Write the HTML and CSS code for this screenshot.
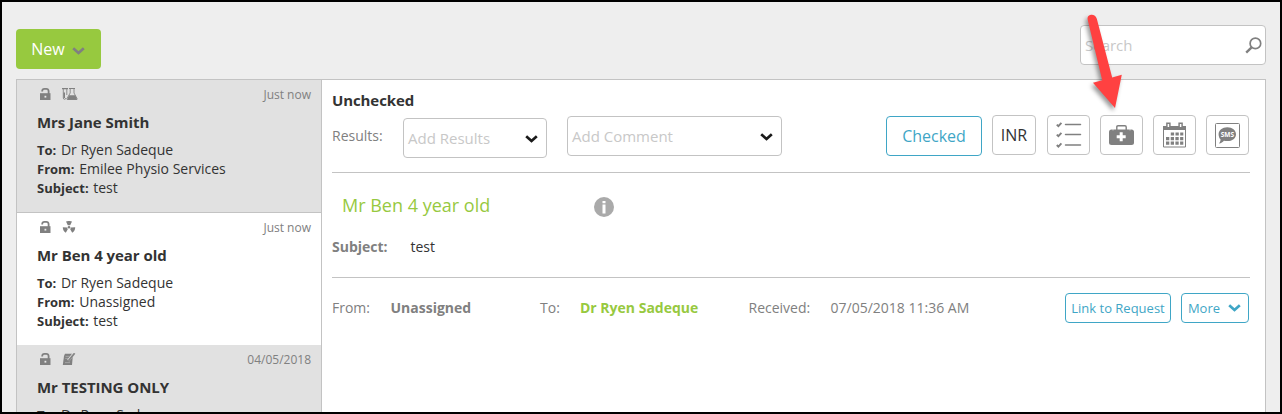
FILE: index.html
```html
<!DOCTYPE html>
<html lang="en">
<head>
  <meta charset="UTF-8">
  <meta name="viewport" content="width=device-width, initial-scale=1">
  <title>Inbox</title>
  <link rel="stylesheet" href="styles.css">
</head>
<body>

  <!-- shared icons -->
  <svg class="sprite" width="0" height="0">
    <symbol id="lock" viewBox="0 0 11 12">
      <path d="M0 5.2h10.500V12H0z"/>
      <path d="M2.200 3.600V3a2.200 2.200 0 0 1 2.200-2.100h1.900A2.300 2.300 0 0 1 8.600 3v3" fill="none" stroke="#808080" stroke-width="1.800"/>
      <path d="M4.500 7.800h1.800v1.800H4.500z" fill="#e8e8e8"/>
    </symbol>
    <symbol id="chevron" viewBox="0 0 13 8">
      <path d="M1.2 1.2l5.3 4.8 5.3-4.8" fill="none" stroke="currentColor" stroke-width="2.7"/>
    </symbol>
  </svg>

  <div class="app">
    <header class="toolbar">
      <button class="btn-new">New <svg class="chev" width="13" height="8"><use href="#chevron"/></svg></button>
      <div class="search">
        <span>Search</span>
        <svg width="17" height="17" viewBox="0 0 17 17" fill="none" stroke="#808080">
          <circle cx="10.4" cy="6.4" r="5.3" stroke-width="1.7"/>
          <path d="M6.6 10.4L1.2 15.6" stroke-width="2.4"/>
        </svg>
      </div>
    </header>

    <main class="panel">
      <aside class="list">
        <article class="item">
          <div class="item-top">
            <svg class="icon lock" width="11" height="12"><use href="#lock"/></svg>
            <svg class="icon" width="16" height="12" viewBox="0 0 16 12">
              <path d="M0 0h6v1.2H0zM7 0h6v1H7z"/>
              <path d="M1.3 1v9a1.2 1.2 0 0 0 2.600 0M4.800 1v6M8.200 1v4L5 10.500q-.4 1 .6 1h8.800q1 0 .6-1L12 5V1" fill="none" stroke="#858585" stroke-width="0.9"/>
              <path d="M1.400 4.500h1.600V10H1.600zM7 7.200h6.300l2 4.500H5z"/>
            </svg>
            <span class="when">Just now</span>
          </div>
          <h3>Mrs Jane Smith</h3>
          <p><b>To:</b> Dr Ryen Sadeque</p>
          <p><b>From:</b> Emilee Physio Services</p>
          <p><b>Subject:</b> test</p>
        </article>

        <article class="item active">
          <div class="item-top">
            <svg class="icon lock" width="11" height="12"><use href="#lock"/></svg>
            <svg class="icon" width="14" height="12" viewBox="0 0 14 12">
              <path d="M4 0.500Q7-0.600 10 0.500L8.200 4.200H5.800zM0.800 6.200L5 6.500 5.800 8.200 3.800 11.800Q0.800 10 0.800 6.200zM13.200 6.200L9 6.500 8.200 8.200l2 3.600Q13.200 10 13.200 6.200z"/>
              <circle cx="7" cy="6.300" r="1.300"/>
            </svg>
            <span class="when">Just now</span>
          </div>
          <h3>Mr Ben 4 year old</h3>
          <p><b>To:</b> Dr Ryen Sadeque</p>
          <p><b>From:</b> Unassigned</p>
          <p><b>Subject:</b> test</p>
        </article>

        <article class="item">
          <div class="item-top">
            <svg class="icon lock" width="11" height="12"><use href="#lock"/></svg>
            <svg class="icon" width="14" height="12" viewBox="0 0 14 12">
              <path d="M3 0.800h8L10 12H0.800L2 3z"/>
              <path d="M3.500 3.400h4M3.200 5.400h3M3 9.600h5" stroke="#bbb" stroke-width="0.6"/>
              <path d="M12 0.3L6.2 7.6" stroke="#e1e1e1" stroke-width="2.600"/>
              <path d="M12.6 0.3L6.400 7.900" stroke="#858585" stroke-width="1.800"/>
            </svg>
            <span class="when">04/05/2018</span>
          </div>
          <h3>Mr TESTING ONLY</h3>
          <p><b>To:</b> Dr Ryen Sadeque</p>
        </article>
      </aside>

      <section class="detail">
        <div class="actions">
          <div class="filters">
            <h2>Unchecked</h2>
            <div class="filter-row">
              <span class="label">Results:</span>
              <div class="select results">Add Results <svg width="13" height="8"><use href="#chevron"/></svg></div>
              <div class="select comment">Add Comment <svg width="13" height="8"><use href="#chevron"/></svg></div>
            </div>
          </div>
          <div class="buttons">
            <button class="btn-checked">Checked</button>
            <button class="tool inr">INR</button>
            <button class="tool">
              <svg width="26" height="26" viewBox="0 0 26 26" fill="none" stroke="#808080">
                <path d="M9.500 2.500h15M9.500 12.500h15M9.500 23h15" stroke-width="1.500" stroke-linecap="round"/>
                <path d="M0.800 2.600l1.600 1.600L5.400 0.900M0.800 12.600l1.600 1.600 3-3.300M0.800 23l1.600 1.600 3-3.300" stroke-width="1.900"/>
              </svg>
            </button>
            <button class="tool">
              <svg width="25" height="20" viewBox="0 0 25 20">
                <rect x="0" y="4.5" width="25" height="15.5" rx="2.5" fill="#808080"/>
                <path d="M7.8 5V2q0-1.2 1.2-1.2h7q1.2 0 1.2 1.2v3" fill="none" stroke="#808080" stroke-width="1.4"/>
                <path d="M4 4.5v0.8M21 4.5v0.8" stroke="#fff"/>
                <path d="M12.200 7.300v9M7.700 11.800h9" stroke="#fff" stroke-width="3"/>
              </svg>
            </button>
            <button class="tool">
              <svg width="23" height="26" viewBox="0 0 23 26">
                <path d="M0 4h23v4H0z" fill="#808080"/>
                <path d="M0.5 8v17h22V8" fill="none" stroke="#808080"/>
                <path d="M3.9 1.2h3v4.500h-3zM16.1 1.2h3v4.500h-3z" fill="#fff" stroke="#808080" stroke-width="1.5"/>
                <path d="M7.800 12h12.500M3 16.600h17.300M3 21.200h17.300" stroke="#808080" stroke-width="3.200" stroke-dasharray="3.300 1.400"/>
              </svg>
            </button>
            <button class="tool">
              <svg width="25" height="25" viewBox="0 0 25 25">
                <rect x="0.5" y="0.5" width="24" height="24" rx="1" fill="none" stroke="#808080"/>
                <path d="M12.300 4.300c5 0 8.700 2.900 8.700 6.900s-3.700 6.900-8.700 6.900c-1.300 0-2.400-.1-3.400-.4-1.200 1.500-2.600 2.500-4.900 2.900 1-1.200 1.600-2.600 1.500-4.300-1.200-1.100-1.900-2.900-1.900-5.100 0-4 3.700-6.900 8.700-6.900z" fill="#808080"/>
                <text x="12.400" y="14" text-anchor="middle" class="sms">SMS</text>
              </svg>
            </button>
          </div>
        </div>

        <div class="summary">
          <div class="patient">
            <span class="name">Mr Ben 4 year old</span>
            <svg width="20" height="20" viewBox="0 0 20 20">
              <circle cx="10" cy="10" r="10" fill="#aaa"/>
              <path d="M8.5 4h3v2.2h-3zM8.5 7.4h3v9h-3z" fill="#fff"/>
            </svg>
          </div>
          <div class="subject"><b>Subject:</b><span>test</span></div>
        </div>

        <div class="meta">
          <span class="meta-from">From:</span>
          <b class="meta-sender">Unassigned</b>
          <span class="meta-to">To:</span>
          <b class="meta-doctor">Dr Ryen Sadeque</b>
          <span class="meta-received">Received:</span>
          <span>07/05/2018 11:36 AM</span>
          <div class="meta-buttons">
            <button class="btn-small link">Link to Request</button>
            <button class="btn-small more">More <svg width="13" height="8"><use href="#chevron"/></svg></button>
          </div>
        </div>
      </section>
    </main>
  </div>

  <!-- pointer over the medical case button -->
  <svg class="arrow" width="50" height="110" viewBox="0 0 50 110">
    <path d="M9.700 10.800Q8.800 6.400 13 5.700Q17.300 5.300 18.800 9.700L34.200 68.500L43.800 65.700L37 99L15 73.800L24.200 71.300z" fill="#ff4141"/>
  </svg>

</body>
</html>
```
FILE: styles.css
```css
* {
  box-sizing: border-box;
}
body {
  margin: 0;
  font-family: "Open Sans", sans-serif;
  font-size: 14px;
  color: #333;
}
h2, h3, p {
  margin: 0;
}
svg {
  display: block;
  flex-shrink: 0;
}
button {
  font-family: inherit;
  background: #fff;
  border-radius: 4px;
  padding: 0;
  display: flex;
  align-items: center;
  justify-content: center;
}
.sprite {
  position: absolute;
}
.app {
  height: 414px;
  border: 2px solid #000;
  background: #eee;
  overflow: hidden;
  display: flex;
  flex-direction: column;
}
/* toolbar */
.toolbar {
  height: 77px;
  flex-shrink: 0;
  padding: 23px 14px 0;
  display: flex;
  justify-content: space-between;
  align-items: flex-start;
}
.btn-new {
  width: 85px;
  height: 40px;
  margin-top: 4px;
  border: none;
  background: #97c93f;
  color: #fff;
  font-size: 16px;
  gap: 7px;
  padding-right: 1px;
}
.btn-new .chev {
  color: #808080;
  margin-top: 4px;
}
.search {
  width: 186px;
  height: 40px;
  border: 1px solid #c3c3c3;
  border-radius: 4px;
  background: #fff;
  color: #c8c8c8;
  font-size: 15px;
  padding: 0 3px 0 4px;
  display: flex;
  align-items: center;
  justify-content: space-between;
}
/* message list */
.panel {
  flex: 1;
  min-height: 0;
  margin: 0 14px;
  border: 1px solid #c3c3c3;
  border-bottom: none;
  background: #fff;
  display: flex;
  overflow: hidden;
}
.list {
  width: 305px;
  flex-shrink: 0;
  border-right: 1px solid #c3c3c3;
}
.item {
  height: 133px;
  padding: 6px 10px 0 20px;
  background: #e1e1e1;
  border-bottom: 1px solid #c3c3c3;
}
.item.active {
  height: 132px;
  background: #fff;
  border-bottom: none;
}
.item-top {
  height: 16px;
  display: flex;
  align-items: center;
}
.icon {
  fill: #808080;
}
.icon.lock {
  margin: 0 11px 0 3px;
}
.when {
  margin-left: auto;
  font-size: 12px;
  color: #808080;
}
.item h3 {
  font-size: 15px;
  line-height: 20px;
  margin: 10px 0 8px;
  letter-spacing: -0.05px;
}
.item p {
  line-height: 19px;
}
.item b {
  font-size: 13px;
  line-height: 1;
  margin-right: 1px;
}
/* message detail */
.detail {
  flex: 1;
  padding: 0 15px 0 10px;
}
.actions {
  height: 93px;
  border-bottom: 1px solid #c3c3c3;
  display: flex;
  justify-content: space-between;
}
.filters h2 {
  font-size: 15px;
  line-height: 20px;
  margin-top: 10px;
  letter-spacing: -0.1px;
}
.filter-row {
  display: flex;
  align-items: flex-start;
  padding-top: 6px;
}
.label {
  width: 71px;
  line-height: 20px;
  padding-top: 10px;
  color: #808080;
}
.select {
  height: 40px;
  border: 1px solid #c3c3c3;
  border-radius: 4px;
  color: #c8c8c8;
  font-size: 15px;
  padding: 0 8px 1px 4px;
  display: flex;
  align-items: center;
  justify-content: space-between;
}
.select svg {
  color: #1a1a1a;
  margin-top: 2px;
}
.results {
  width: 144px;
  margin-top: 2px;
}
.comment {
  width: 215px;
  margin-left: 20px;
}
.buttons {
  display: flex;
  align-items: flex-start;
  gap: 10px;
  padding: 35px 1px 0 0;
}
.btn-checked {
  width: 96px;
  height: 40px;
  margin-top: 1px;
  border: 1px solid #3fa6c6;
  color: #3fa6c6;
  font-size: 16px;
}
.tool {
  width: 43px;
  height: 40px;
  border: 1px solid #c3c3c3;
}
.inr {
  width: 44px;
  margin-right: 1px;
  font-size: 16px;
  color: #333;
}
.sms {
  font-size: 6.5px;
  font-weight: bold;
  fill: #fff;
}
.summary {
  height: 105px;
  border-bottom: 1px solid #c3c3c3;
  padding-top: 20px;
}
.patient {
  height: 27px;
  padding-left: 10px;
  display: flex;
  align-items: center;
}
.name {
  width: 252px;
  font-size: 18px;
  line-height: 24px;
  margin-top: -4px;
  color: #97c93f;
}
.subject {
  display: flex;
  margin-top: 17px;
  line-height: 20px;
}
.subject b {
  width: 78.5px;
  color: #808080;
}
.meta {
  height: 60px;
  display: flex;
  align-items: center;
  color: #808080;
}
.meta > span, .meta > b {
  margin-top: -2px;
}
.meta-from {
  width: 58.5px;
}
.meta-sender {
  width: 149.5px;
}
.meta-to {
  width: 40px;
}
.meta-doctor {
  width: 168.5px;
  color: #97c93f;
}
.meta-received {
  width: 82px;
}
.meta-buttons {
  margin-left: auto;
  display: flex;
  gap: 10px;
  padding-right: 1px;
}
.btn-small {
  height: 30px;
  border: 1px solid #3fa6c6;
  color: #3fa6c6;
  font-size: 13px;
}
.link {
  width: 106px;
}
.more {
  width: 68px;
  gap: 8px;
  padding-right: 1px;
}
/* red pointer */
.arrow {
  position: absolute;
  left: 1078px;
  top: 9px;
  filter: drop-shadow(-2px 3px 2px rgba(0,0,0,0.4));
}
```
